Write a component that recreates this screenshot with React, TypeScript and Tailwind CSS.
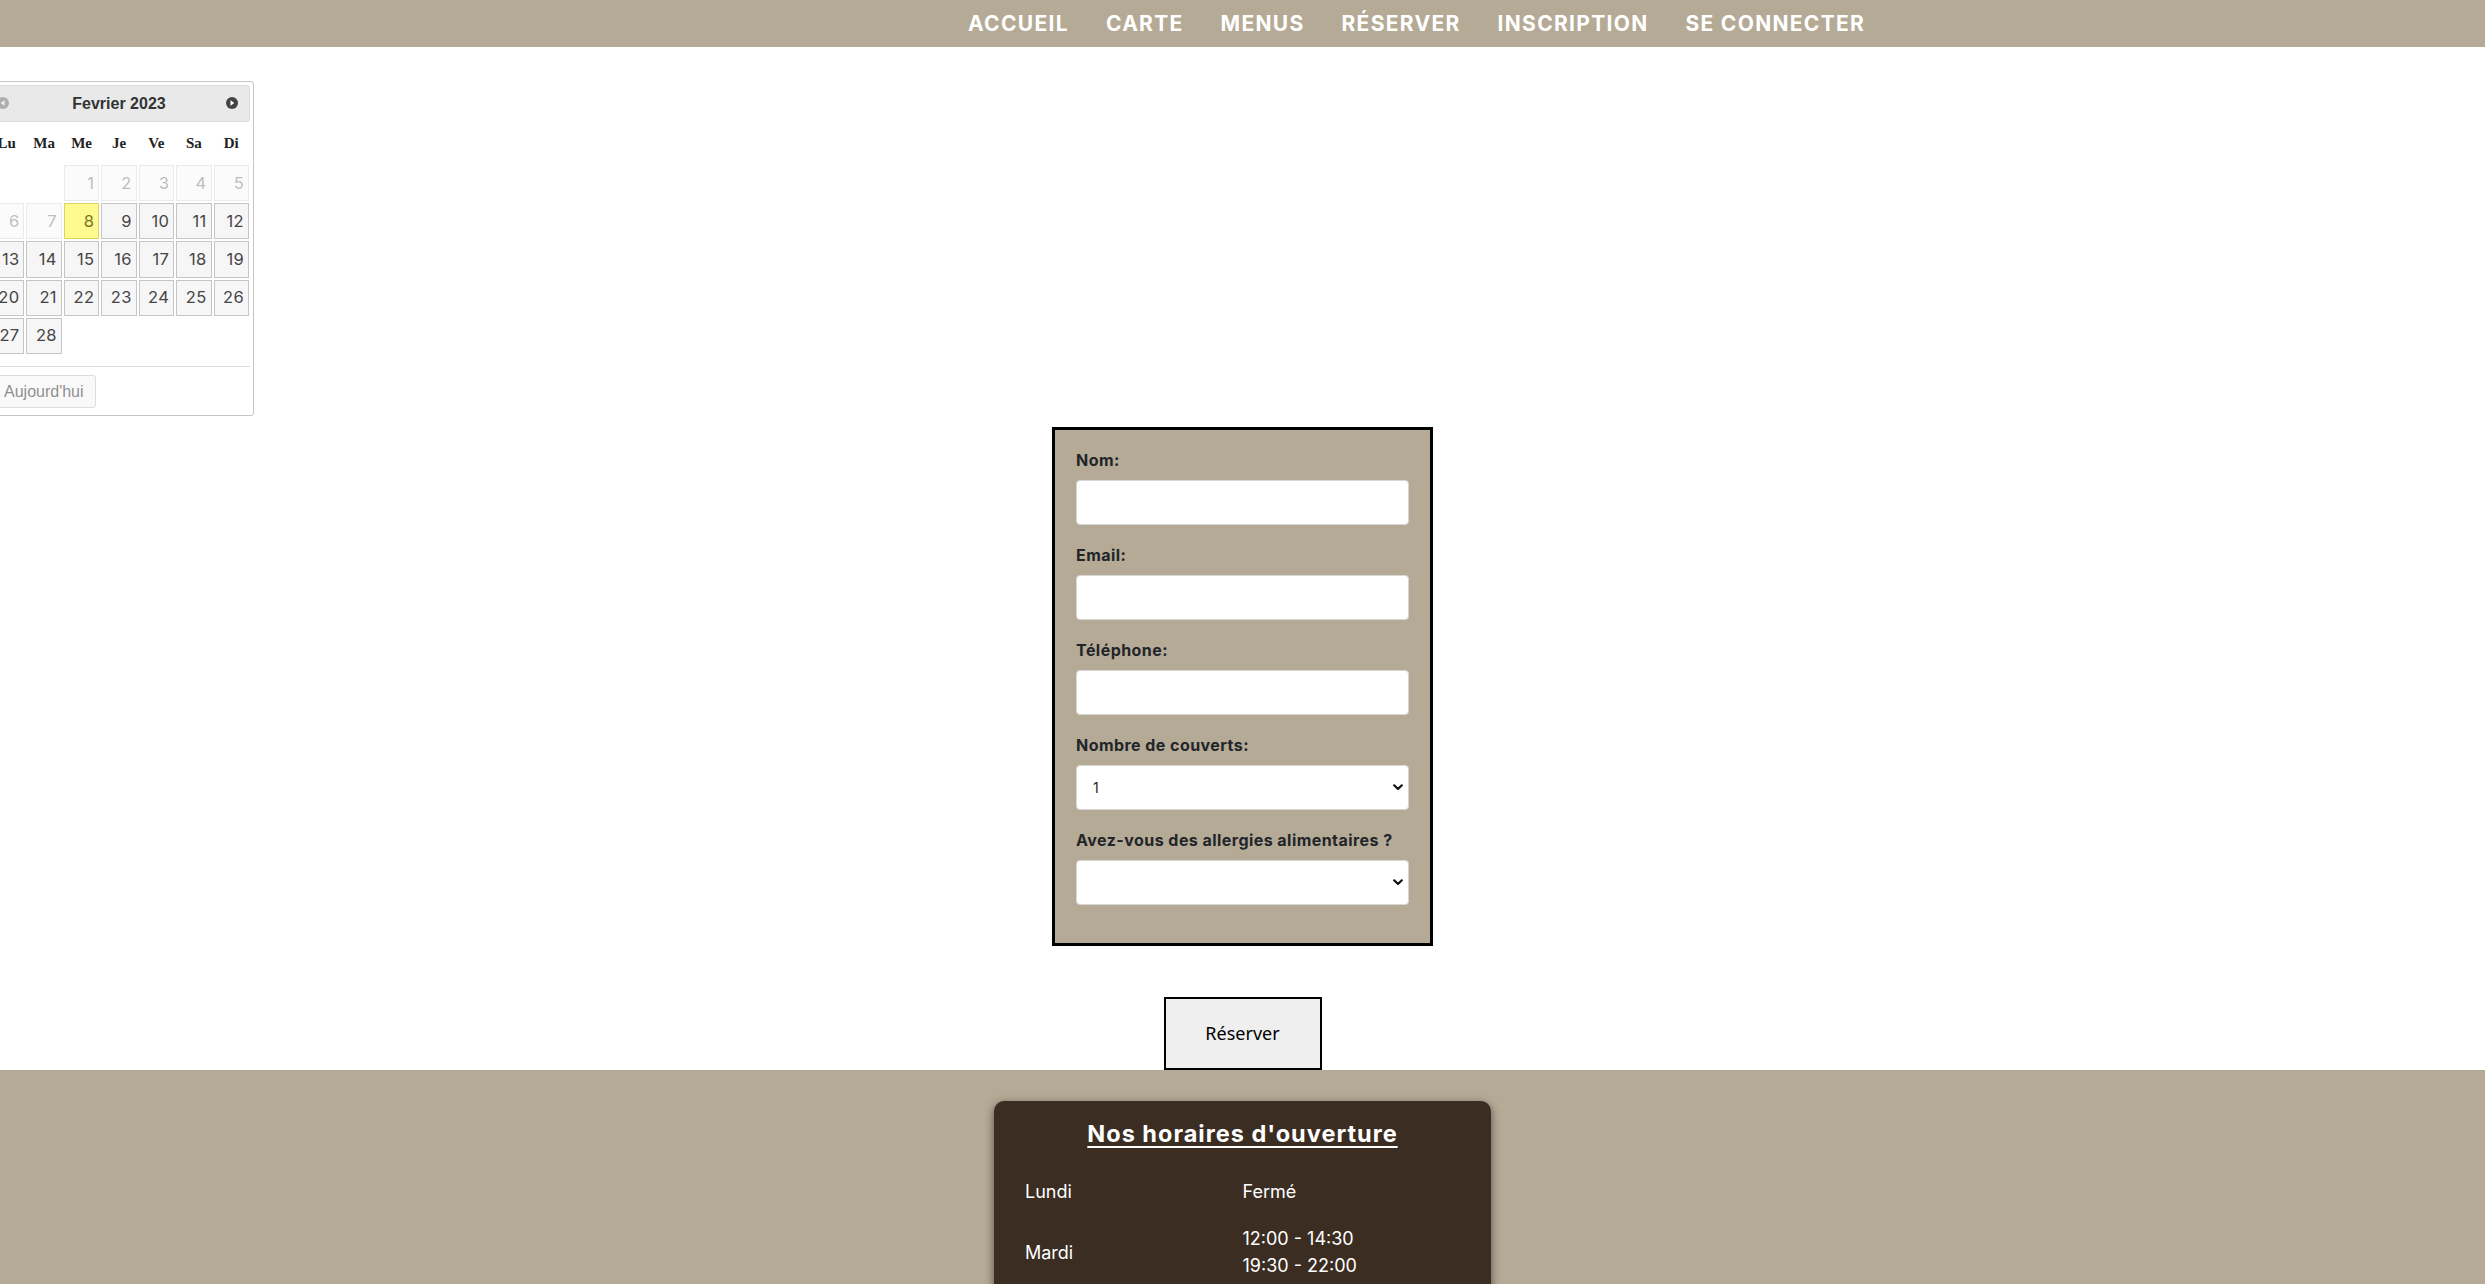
import React from "react";

const font = { fontFamily: 'Inter, "Noto Sans", sans-serif' };

function CalIcon({ dir, dim }: { dir: "prev" | "next"; dim?: boolean }) {
  return (
    <svg width="12" height="12" viewBox="0 0 12 12" className={dim ? "opacity-35" : ""}>
      <circle cx="6" cy="6" r="6" fill="#444" />
      {dir === "next" ? (
        <polygon points="4.5,3.2 8.3,6 4.5,8.8" fill="#fff" />
      ) : (
        <polygon points="7.5,3.2 3.7,6 7.5,8.8" fill="#fff" />
      )}
    </svg>
  );
}

type Cell = { n?: number; kind?: "dis" | "hi" | "norm" };

function buildRows(): Cell[][] {
  const rows: Cell[][] = [];
  const r1: Cell[] = [{}, {}, ...[1, 2, 3, 4, 5].map((n) => ({ n, kind: "dis" as const }))];
  rows.push(r1);
  const r2: Cell[] = [
    { n: 6, kind: "dis" },
    { n: 7, kind: "dis" },
    { n: 8, kind: "hi" },
    ...[9, 10, 11, 12].map((n) => ({ n, kind: "norm" as const })),
  ];
  rows.push(r2);
  rows.push([13, 14, 15, 16, 17, 18, 19].map((n) => ({ n, kind: "norm" as const })));
  rows.push([20, 21, 22, 23, 24, 25, 26].map((n) => ({ n, kind: "norm" as const })));
  rows.push([{ n: 27, kind: "norm" }, { n: 28, kind: "norm" }, {}, {}, {}, {}, {}]);
  return rows;
}

function Calendar() {
  const rows = buildRows();
  const days = ["Lu", "Ma", "Me", "Je", "Ve", "Sa", "Di"];
  return (
    <div
      className="absolute left-[-16px] top-[81px] w-[270px] rounded-[3px] border border-[#c5c5c5] bg-white px-[3px] pt-[3px] pb-[7px]"
    >
      <div className="relative flex h-[37px] items-center justify-center rounded-[3px] border border-[#dddddd] bg-[#e9e9e9]">
        <span
          className="text-[16px] font-bold text-[#333333]"
          style={{ fontFamily: '"Liberation Sans", Arial, sans-serif' }}
        >
          Fevrier 2023
        </span>
        <span className="absolute left-[8px] top-[11px] flex">
          <CalIcon dir="prev" dim />
        </span>
        <span className="absolute right-[11px] top-[11px] flex">
          <CalIcon dir="next" />
        </span>
      </div>
      <div
        className="grid h-[42px] grid-cols-7 items-center text-center text-[15px] font-bold text-[#222]"
        style={{ fontFamily: '"Liberation Serif", "Times New Roman", serif' }}
      >
        {days.map((d) => (
          <span key={d}>{d}</span>
        ))}
      </div>
      <div className="flex flex-col" style={font}>
        {rows.map((row, i) => (
          <div key={i} className="grid h-[38.2px] grid-cols-7">
            {row.map((c, j) => (
              <div key={j} className="p-[1px]">
                {c.n !== undefined && (
                  <div
                    className={
                      c.kind === "hi"
                        ? "flex h-full items-center justify-end border border-[#dad55e] bg-[#fffa90] pr-[4px] text-[16.5px] tracking-[0.3px] text-[#777620]"
                        : c.kind === "dis"
                        ? "flex h-full items-center justify-end border border-[#c5c5c5] bg-[#f6f6f6] pr-[4px] text-[16.5px] tracking-[0.3px] text-[#454545] opacity-35"
                        : "flex h-full items-center justify-end border border-[#c5c5c5] bg-[#f6f6f6] pr-[4px] text-[16.5px] tracking-[0.3px] text-[#454545]"
                    }
                  >
                    {c.n}
                  </div>
                )}
              </div>
            ))}
          </div>
        ))}
      </div>
      <div className="mt-[11px] border-t border-[#dddddd] pt-[8px]">
        <button
          className="ml-[4px] rounded-[3px] border border-[#c5c5c5] bg-[#f6f6f6] px-[11px] py-[6px] text-[16px] leading-[19px] text-[#454545] opacity-60"
          style={{ fontFamily: '"Liberation Sans", Arial, sans-serif' }}
        >
          Aujourd'hui
        </button>
      </div>
    </div>
  );
}

function Chevron() {
  return (
    <svg width="10" height="7" viewBox="0 0 10 7" className="pointer-events-none absolute right-[6px] top-[19px]">
      <path d="M1.2 1.3 L5 5 L8.8 1.3" fill="none" stroke="#111" strokeWidth="2.2" strokeLinecap="round" strokeLinejoin="round" />
    </svg>
  );
}

function Field({ label, children }: { label: string; children: React.ReactNode }) {
  return (
    <div className="mb-[18px]">
      <label className="mb-[8px] block text-[16px] font-bold leading-[24px] tracking-[0.45px] text-[#212529]">{label}</label>
      {children}
    </div>
  );
}

const inputCls = "block h-[45px] w-full rounded-[4px] border border-[#d6d6d6] bg-white";

export default function App() {
  const nav = ["ACCUEIL", "CARTE", "MENUS", "RÉSERVER", "INSCRIPTION", "SE CONNECTER"];
  const hours: [string, string[]][] = [
    ["Lundi", ["Fermé"]],
    ["Mardi", ["12:00 - 14:30", "19:30 - 22:00"]],
    ["Mercredi", ["12:00 - 14:30", "19:30 - 22:00"]],
    ["Jeudi", ["12:00 - 14:30", "19:30 - 22:00"]],
    ["Vendredi", ["12:00 - 14:30", "19:30 - 23:00"]],
    ["Samedi", ["19:30 - 23:00"]],
    ["Dimanche", ["12:00 - 15:00"]],
  ];
  return (
    <div className="relative min-h-screen bg-white" style={font}>
      <nav className="flex h-[47px] items-center gap-[37px] bg-[#b5aa96] pl-[968px]">
        {nav.map((n) => (
          <a key={n} className="text-[21px] font-bold tracking-[1.3px] text-white">
            {n}
          </a>
        ))}
      </nav>

      <main className="flex flex-col items-center pt-[380px]">
        <form className="w-[381px] border-[3px] border-black bg-[#b5aa96] px-[21px] pt-[18px] pb-[20px]">
          <Field label="Nom:">
            <input className={inputCls} />
          </Field>
          <Field label="Email:">
            <input className={inputCls} />
          </Field>
          <Field label="Téléphone:">
            <input className={inputCls} />
          </Field>
          <Field label="Nombre de couverts:">
            <div className="relative">
              <div className={inputCls + " flex items-center pl-[16px] text-[14px] text-[#212529]"}>1</div>
              <Chevron />
            </div>
          </Field>
          <Field label="Avez-vous des allergies alimentaires ?">
            <div className="relative">
              <div className={inputCls} />
              <Chevron />
            </div>
          </Field>
        </form>
        <button
          className="mt-[51px] h-[73px] w-[158px] border-2 border-black bg-[#efefef] text-[18px] text-black"
          style={{ fontFamily: '"Noto Sans", "Open Sans", sans-serif' }}
        >
          Réserver
        </button>
      </main>

      <footer className="bg-[#b5aa96] pt-[31px] pb-[40px]">
        <div className="mx-auto w-[497px] rounded-[10px] bg-[#3b2d22] px-[31px] pt-[15px] pb-[24px] text-white shadow-[0_3px_10px_rgba(0,0,0,0.55)]">
          <h2 className="text-center text-[23.5px] font-bold leading-[36px] tracking-[1px] underline decoration-2 underline-offset-[4px]">
            Nos horaires d'ouverture
          </h2>
          <table className="mt-[16px] w-full table-fixed text-[18px]">
            <tbody>
              {hours.map(([d, h]) => (
                <tr key={d}>
                  <td className="py-[10px] align-middle leading-[27px]">{d}</td>
                  <td className="py-[10px] align-middle leading-[27px]">
                    {h.map((x) => (
                      <div key={x}>{x}</div>
                    ))}
                  </td>
                </tr>
              ))}
            </tbody>
          </table>
        </div>
      </footer>

      <Calendar />
    </div>
  );
}
